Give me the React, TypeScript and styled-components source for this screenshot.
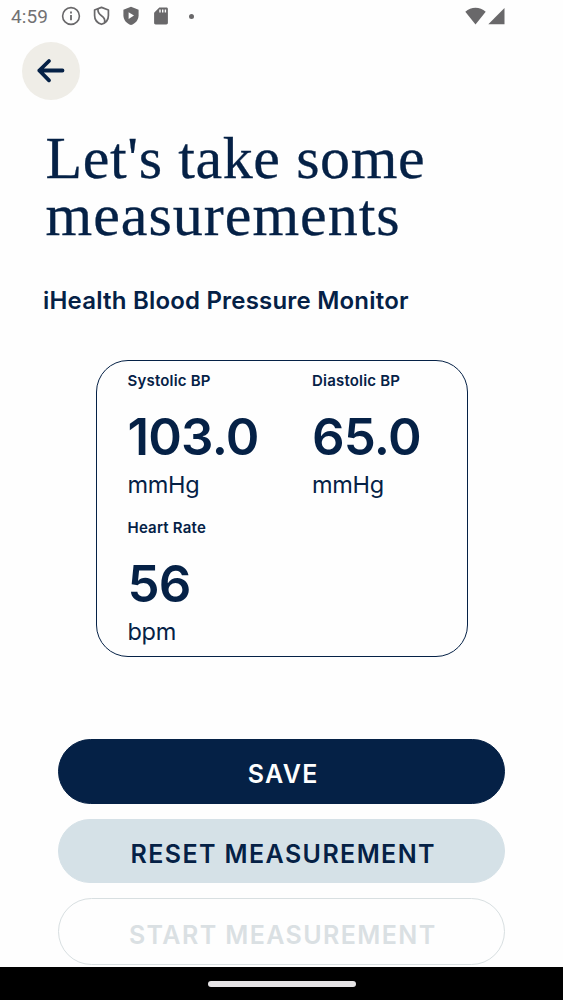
import React from "react";
import styled, { createGlobalStyle } from "styled-components";

const navy = "#052146";

const GlobalStyle = createGlobalStyle`
  * { box-sizing: border-box; }
  body { margin: 0; background: #fefefe; }
`;

const Screen = styled.div`
  display: flex;
  flex-direction: column;
  width: 563px;
  height: 1000px;
  overflow: hidden;
  background: #fefefe;
  color: ${navy};
  font-family: Inter, "Liberation Sans", sans-serif;
`;

const StatusBar = styled.header`
  display: flex;
  align-items: center;
  justify-content: space-between;
  height: 33px;
  flex: none;
  padding: 0 58px 1px 11px;
  color: #69686a;
`;

const StatusGroup = styled.div<{ $gap: number }>`
  display: flex;
  align-items: center;
  gap: ${(p) => p.$gap}px;
  svg { display: block; }
`;

const Clock = styled.span`
  width: 38px;
  font: 400 19px/24px Roboto, sans-serif;
  color: #727173;
  letter-spacing: 0.1px;
  padding-top: 2px;
`;

const Dot = styled.span`
  width: 5px;
  height: 5px;
  margin-left: 6px;
  border-radius: 50%;
  background: #69686a;
`;

const BackButton = styled.button`
  display: flex;
  align-items: center;
  justify-content: center;
  width: 58px;
  height: 58px;
  flex: none;
  margin: 9px 0 0 22px;
  padding: 0;
  border: 0;
  border-radius: 50%;
  background: #efede7;
`;

const Title = styled.h1`
  margin: 30px 0 0 45.5px;
  font: 400 60px/57px "Liberation Serif", serif;
  -webkit-text-stroke: 0.3px ${navy};
`;

const TitleLine = styled.span<{ $spacing: number }>`
  display: block;
  letter-spacing: ${(p) => p.$spacing}px;
`;

const Device = styled.h2`
  margin: 42px 0 0 43px;
  font-size: 24px;
  line-height: 30px;
  font-weight: 600;
  letter-spacing: 0.2px;
`;

const Card = styled.section`
  display: grid;
  grid-template-columns: 184.5px 1fr;
  align-content: start;
  row-gap: 18px;
  width: 372px;
  height: 297px;
  flex: none;
  margin: 44px 0 0 96px;
  padding: 10px 0 0 30.5px;
  border: 1.5px solid ${navy};
  border-radius: 32px;
`;

const Reading = styled.div`
  display: flex;
  flex-direction: column;
  white-space: nowrap;
`;

const Label = styled.span`
  font-size: 15px;
  line-height: 20px;
  font-weight: 600;
  letter-spacing: 0.2px;
`;

const Value = styled.span`
  margin-top: 16px;
  font-size: 51px;
  line-height: 60px;
  font-weight: 600;
  letter-spacing: -0.8px;
`;

const Unit = styled.span`
  margin-top: 3px;
  font-size: 23.5px;
  line-height: 30px;
  font-weight: 400;
  letter-spacing: -0.3px;
`;

const Actions = styled.div`
  display: flex;
  flex-direction: column;
  gap: 15px;
  width: 446.5px;
  margin: 82px 0 0 58px;
`;

const tones = {
  primary: { bg: navy, fg: "#fefefe", line: navy },
  soft: { bg: "#d5e1e7", fg: navy, line: "#d5e1e7" },
  disabled: { bg: "transparent", fg: "#dae0e3", line: "#d8dfe1" },
};

const ActionButton = styled.button<{ $tone: keyof typeof tones; $height: number }>`
  height: ${(p) => p.$height}px;
  flex: none;
  padding: ${(p) => (p.$tone === "disabled" ? "6px 0 0 3px" : "5px 0 0 4px")};
  border: 1px solid ${(p) => tones[p.$tone].line};
  border-radius: 34px;
  background: ${(p) => tones[p.$tone].bg};
  color: ${(p) => tones[p.$tone].fg};
  font: 600 25px/30px Inter, sans-serif;
  letter-spacing: 1.4px;
  white-space: nowrap;
`;

const NavBar = styled.footer`
  display: flex;
  align-items: center;
  justify-content: center;
  height: 33px;
  flex: none;
  margin-top: auto;
  background: #000;
`;

const HomeHandle = styled.div`
  width: 148px;
  height: 6px;
  border-radius: 3px;
  background: #e6e4e6;
`;

const readings = [
  { label: "Systolic BP", value: "103.0", unit: "mmHg" },
  { label: "Diastolic BP", value: "65.0", unit: "mmHg" },
  { label: "Heart Rate", value: "56", unit: "bpm" },
];

const InfoIcon = () => (
  <svg width="20" height="20" viewBox="0 0 20 20" fill="none" stroke="currentColor">
    <circle cx="10" cy="10" r="8.4" strokeWidth="1.6" />
    <path d="M10 9v5.2M10 5.6v2" strokeWidth="1.8" />
  </svg>
);

const ShieldSlashIcon = () => (
  <svg width="17" height="20" viewBox="0 0 17 20" fill="none" stroke="currentColor" strokeWidth="1.7" strokeLinejoin="round">
    <path d="M8.5 1.4 15.4 4v5.4c0 4.1-2.8 7.5-6.9 8.9-4.1-1.4-6.9-4.8-6.9-8.9V4z" />
    <path d="M5 2.9c-.4 3.3.6 4.9 3.5 6.8 3 2 3.8 4.2 3 6.8" />
  </svg>
);

const ShieldPlayIcon = () => (
  <svg width="16" height="20" viewBox="0 0 16 20">
    <path d="M8 .7 15.6 3.7v5.6c0 4.6-3.2 8.5-7.6 9.8C3.6 17.8.4 13.9.4 9.3V3.7z" fill="currentColor" />
    <path d="M5.6 6.3v6.600L11 9.6z" fill="#fefefe" />
  </svg>
);

const SdCardIcon = () => (
  <svg width="14" height="18" viewBox="0 0 14 18">
    <path d="M5.3.5h7c1 0 1.6.7 1.6 1.6v13.7c0 1-.7 1.7-1.6 1.7H1.7c-1 0-1.6-.7-1.6-1.7V5.8z" fill="currentColor" />
    <path d="M6 2.6v3M8.7 2.6v3M11.4 2.6v3" stroke="#fefefe" strokeWidth="1.4" />
  </svg>
);

const WifiIcon = () => (
  <svg width="21" height="18" viewBox="0 0 21 18">
    <path d="M10.5 17.5.3 4.7C3.3 2 6.7.7 10.5.7s7.2 1.3 10.2 4z" fill="currentColor" />
  </svg>
);

const SignalIcon = () => (
  <svg width="17" height="18" viewBox="0 0 17 18">
    <path d="M16.5 1v16.3H.3z" fill="currentColor" />
  </svg>
);

const ArrowLeft = () => (
  <svg width="30" height="26" viewBox="0 0 30 26" fill="none" stroke={navy} strokeWidth="3.8" strokeLinecap="round" strokeLinejoin="round">
    <path d="M26.5 12.5H3.3M13 3 3.3 12.5 13 22.3" />
  </svg>
);

export default function App() {
  return (
    <Screen>
      <GlobalStyle />
      <StatusBar>
        <StatusGroup $gap={12}>
          <Clock>4:59</Clock>
          <StatusGroup $gap={12}>
            <InfoIcon />
            <StatusGroup $gap={13}>
              <ShieldSlashIcon />
              <StatusGroup $gap={15}>
                <ShieldPlayIcon />
                <SdCardIcon />
                <Dot />
              </StatusGroup>
            </StatusGroup>
          </StatusGroup>
        </StatusGroup>
        <StatusGroup $gap={2}>
          <WifiIcon />
          <SignalIcon />
        </StatusGroup>
      </StatusBar>
      <BackButton aria-label="Back">
        <ArrowLeft />
      </BackButton>
      <Title>
        <TitleLine $spacing={0.6}>Let's take some</TitleLine>
        <TitleLine $spacing={1}>measurements</TitleLine>
      </Title>
      <Device>iHealth Blood Pressure Monitor</Device>
      <Card>
        {readings.map((r) => (
          <Reading key={r.label}>
            <Label>{r.label}</Label>
            <Value>{r.value}</Value>
            <Unit>{r.unit}</Unit>
          </Reading>
        ))}
      </Card>
      <Actions>
        <ActionButton $tone="primary" $height={65}>SAVE</ActionButton>
        <ActionButton $tone="soft" $height={64}>RESET MEASUREMENT</ActionButton>
        <ActionButton $tone="disabled" $height={67}>START MEASUREMENT</ActionButton>
      </Actions>
      <NavBar>
        <HomeHandle />
      </NavBar>
    </Screen>
  );
}
